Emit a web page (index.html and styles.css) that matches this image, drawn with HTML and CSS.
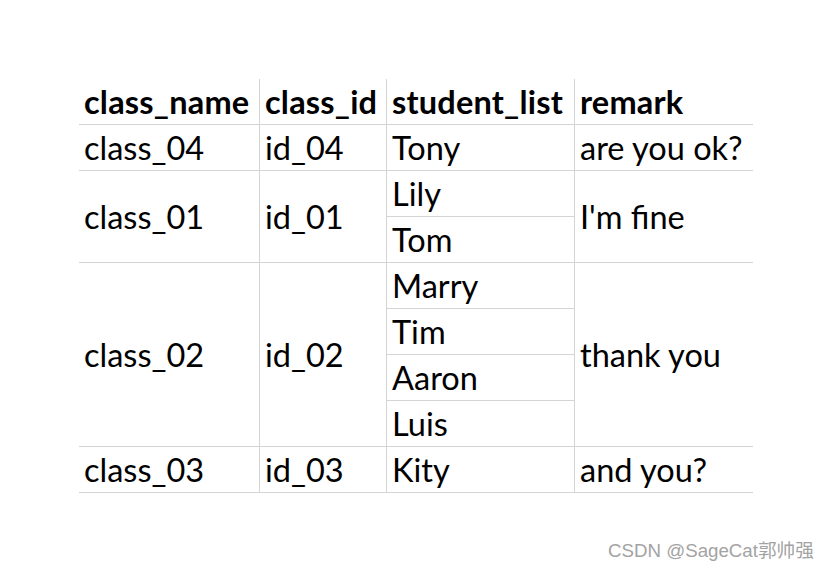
FILE: index.html
```html
<!DOCTYPE html>
<html>
<head>
<meta charset="utf-8">
<link rel="stylesheet" href="styles.css">
</head>
<body>
<div class="page">
  <table class="sheet">
    <colgroup>
      <col class="c1"><col class="c2"><col class="c3"><col class="c4">
    </colgroup>
    <tr class="head">
      <th>class_name</th><th>class_id</th><th>student_list</th><th class="last">remark</th>
    </tr>
    <tr>
      <td>class_04</td><td>id_04</td><td>Tony</td><td class="last">are you ok?</td>
    </tr>
    <tr>
      <td rowspan="2">class_01</td><td rowspan="2">id_01</td><td>Lily</td><td rowspan="2" class="last">I'm fine</td>
    </tr>
    <tr>
      <td>Tom</td>
    </tr>
    <tr>
      <td rowspan="4">class_02</td><td rowspan="4">id_02</td><td>Marry</td><td rowspan="4" class="last">thank you</td>
    </tr>
    <tr><td>Tim</td></tr>
    <tr><td>Aaron</td></tr>
    <tr><td>Luis</td></tr>
    <tr>
      <td>class_03</td><td>id_03</td><td>Kity</td><td class="last">and you?</td>
    </tr>
  </table>
  <div class="mark">CSDN @SageCat郭帅强</div>
</div>
</body>
</html>
```
FILE: styles.css
```css
html, body {
  margin: 0;
  padding: 0;
  background: #ffffff;
}
.page {
  width: 829px;
  height: 569px;
  padding-top: 79px;
  box-sizing: border-box;
}
.sheet {
  margin-left: 79px;
  border-collapse: separate;
  border-spacing: 0;
  table-layout: fixed;
  width: 674px;
  font-family: Lato, "Open Sans", sans-serif;
  font-size: 32.5px;
  color: #000;
}
.c1 { width: 181px; }
.c2 { width: 127px; }
.c3 { width: 188px; }
.c4 { width: 178px; }
.sheet th,
.sheet td {
  padding: 1px 0 0 5px;
  box-sizing: border-box;
  height: 46px;
  border-right: 1px solid #d4d4d4;
  border-bottom: 1px solid #d4d4d4;
  text-align: left;
  vertical-align: middle;
  white-space: nowrap;
  overflow: hidden;
  line-height: 40px;
}
.sheet th {
  font-weight: 700;
  letter-spacing: 0.2px;
}
.sheet .last {
  border-right: none;
}
.mark {
  margin-top: 42px;
  text-align: right;
  padding-right: 15px;
  font-family: "Liberation Sans", "Noto Sans CJK SC", sans-serif;
  font-size: 18.7px;
  color: #a3a3a3;
}
```
